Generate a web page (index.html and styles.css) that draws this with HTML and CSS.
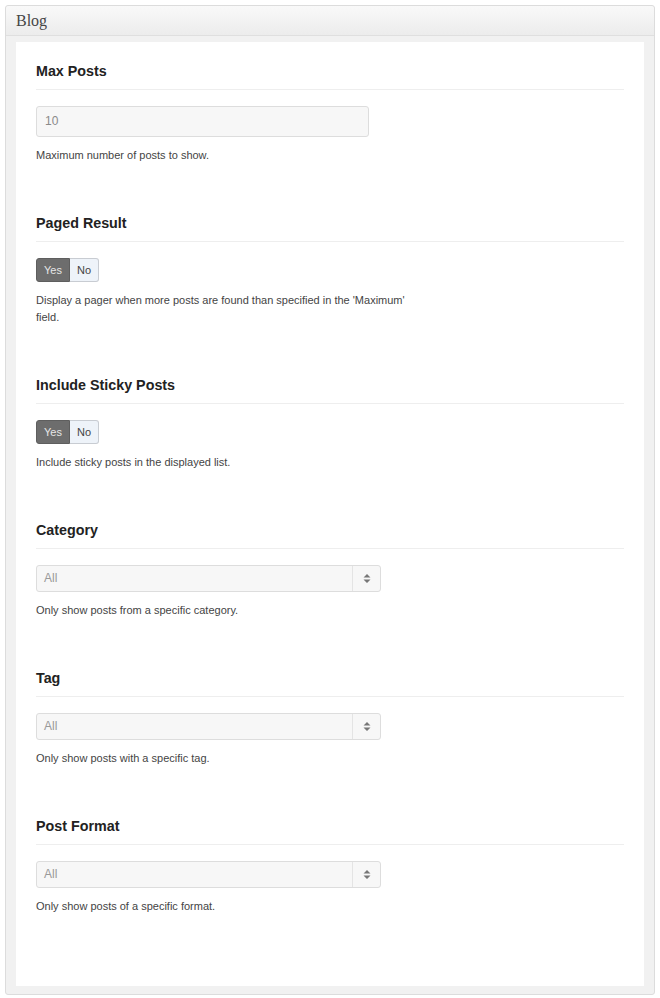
FILE: index.html
```html
<!DOCTYPE html>
<html>
<head>
<meta charset="utf-8">
<link rel="stylesheet" href="styles.css">
</head>
<body>
<div class="box">
  <div class="box-head">Blog</div>
  <div class="box-body">
    <div class="panel">
      <div class="field">
        <h3 class="field-title">Max Posts</h3>
        <div class="text-input">10</div>
        <p class="help">Maximum number of posts to show.</p>
      </div>
      <div class="field">
        <h3 class="field-title">Paged Result</h3>
        <div class="toggle"><span class="tg tg-on">Yes</span><span class="tg tg-off">No</span></div>
        <p class="help">Display a pager when more posts are found than specified in the 'Maximum' field.</p>
      </div>
      <div class="field">
        <h3 class="field-title">Include Sticky Posts</h3>
        <div class="toggle"><span class="tg tg-on">Yes</span><span class="tg tg-off">No</span></div>
        <p class="help">Include sticky posts in the displayed list.</p>
      </div>
      <div class="field">
        <h3 class="field-title">Category</h3>
        <div class="select"><span class="select-val">All</span><span class="select-arrow"><svg width="8" height="9" viewBox="0 0 8 9"><path d="M4 0 L7.5 3.5 H0.5 Z M4 9 L0.5 5.5 H7.5 Z" fill="#777"/></svg></span></div>
        <p class="help">Only show posts from a specific category.</p>
      </div>
      <div class="field">
        <h3 class="field-title">Tag</h3>
        <div class="select"><span class="select-val">All</span><span class="select-arrow"><svg width="8" height="9" viewBox="0 0 8 9"><path d="M4 0 L7.5 3.5 H0.5 Z M4 9 L0.5 5.5 H7.5 Z" fill="#777"/></svg></span></div>
        <p class="help">Only show posts with a specific tag.</p>
      </div>
      <div class="field">
        <h3 class="field-title">Post Format</h3>
        <div class="select"><span class="select-val">All</span><span class="select-arrow"><svg width="8" height="9" viewBox="0 0 8 9"><path d="M4 0 L7.5 3.5 H0.5 Z M4 9 L0.5 5.5 H7.5 Z" fill="#777"/></svg></span></div>
        <p class="help">Only show posts of a specific format.</p>
      </div>
    </div>
  </div>
</div>
</body>
</html>
```

FILE: styles.css
```css
html, body {
  margin: 0;
  padding: 0;
  background: #ffffff;
}
body {
  padding: 5px;
  font-family: "Liberation Sans", Arial, sans-serif;
}
.box {
  width: 648px;
  height: 988px;
  border: 1px solid #dcdcdc;
  border-radius: 3px;
  background: #f1f1f1;
  display: flex;
  flex-direction: column;
  box-sizing: content-box;
}
.box-head {
  height: 29px;
  line-height: 29px;
  padding-left: 10px;
  font-family: "Liberation Serif", "Times New Roman", serif;
  font-size: 16px;
  color: #464646;
  background: linear-gradient(#f9f9f9, #ececec);
  border-bottom: 1px solid #dfdfdf;
  border-radius: 3px 3px 0 0;
}
.box-body {
  flex: 1;
  padding: 6px 10px 8px 10px;
  display: flex;
}
.panel {
  flex: 1;
  background: #ffffff;
  padding: 20px 20px 20px 20px;
}
.field {
  margin-bottom: 50px;
}
.field-title {
  margin: 0;
  font-size: 14.3px;
  font-weight: bold;
  line-height: 18px;
  color: #222;
  padding-bottom: 9px;
  border-bottom: 1px solid #eeeeee;
  margin-bottom: 16px;
}
.text-input {
  height: 29px;
  border: 1px solid #dddddd;
  border-radius: 3px;
  background: #f7f7f7;
  color: #8a8a8a;
  font-size: 12px;
  line-height: 29px;
  padding-left: 8px;
  box-sizing: content-box;
  width: 323px;
  margin-bottom: 3px;
}
.help {
  margin: 10px 0 0 0;
  font-size: 11px;
  line-height: 17px;
  color: #444;
  max-width: 380px;
}
.toggle {
  display: flex;
  margin-top: 2px;
}
.tg {
  height: 22px;
  line-height: 22px;
  font-size: 11px;
  border: 1px solid #c8ccd2;
}
.tg-on {
  background: #6d6d6d;
  border-color: #5e5e5e;
  color: #e6e6e6;
  border-radius: 3px 0 0 3px;
  width: 32px;
  text-align: center;
}
.tg-off {
  background: #eef3f9;
  color: #444;
  border-left: none;
  border-radius: 0 3px 3px 0;
  width: 28px;
  text-align: center;
}
.select {
  width: 343px;
  height: 25px;
  margin-top: 2px;
  border: 1px solid #dddddd;
  border-radius: 3px;
  background: #f7f7f7;
  display: flex;
  align-items: stretch;
}
.select-val {
  flex: 1;
  padding-left: 7px;
  font-size: 12px;
  line-height: 25px;
  color: #999;
}
.select-arrow {
  width: 27px;
  border-left: 1px solid #e4e4e4;
  display: flex;
  align-items: center;
  justify-content: center;
}
```
